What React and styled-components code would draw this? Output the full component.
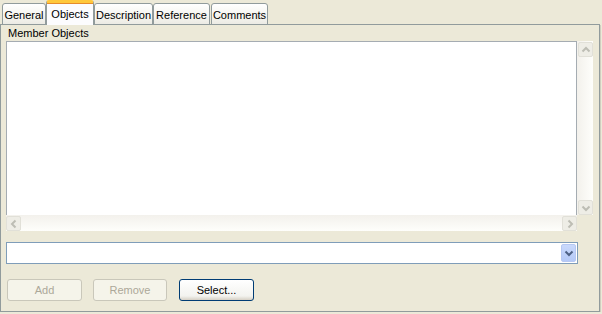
import React from "react";
import styled, { createGlobalStyle } from "styled-components";

const GlobalStyle = createGlobalStyle`
  html, body {
    margin: 0;
    padding: 0;
    background: #ece9d8;
  }
  body {
    font-family: "Liberation Sans", Arial, sans-serif;
    font-size: 11px;
    color: #000;
  }
`;

const Frame = styled.div`
  width: 600px;
  height: 312px;
  display: flex;
  flex-direction: column;
`;

const TabStrip = styled.div`
  height: 25px;
  display: flex;
  align-items: flex-end;
  padding-left: 2px;
  position: relative;
  z-index: 1;
`;

const Tab = styled.div`
  box-sizing: border-box;
  width: ${({ $w }) => $w}px;
  height: ${({ $active }) => ($active ? 25 : 22)}px;
  margin-right: ${({ $gap }) => $gap || 0}px;
  border: 1px solid #919b9c;
  border-bottom: ${({ $active }) => ($active ? "none" : "1px solid #919b9c")};
  border-top: ${({ $active }) => ($active ? "3px solid #ffc83c" : "1px solid #919b9c")};
  border-radius: 3px 3px 0 0;
  background: ${({ $active }) =>
    $active ? "#fcfcfe" : "linear-gradient(#ffffff, #f3f2ec 70%, #ecebe5)"};
  display: flex;
  align-items: center;
  justify-content: center;
  padding-top: ${({ $active }) => ($active ? 0 : 1)}px;
  white-space: nowrap;
  box-shadow: ${({ $active }) => ($active ? "inset 0 1px 0 #e68b2c" : "none")};
`;

const Pane = styled.div`
  box-sizing: border-box;
  flex: 1;
  margin-top: -1px;
  border: 1px solid #919b9c;
  background: #ece9d8;
  padding: 0 6px 0 5px;
  display: flex;
  flex-direction: column;
  box-shadow: 1px 1px 0 #d0cec0;
`;

const Label = styled.div`
  height: 16px;
  line-height: 16px;
  padding-left: 2px;
`;

const ScrollPane = styled.div`
  height: 190px;
  display: grid;
  grid-template-columns: 1fr 16px;
  grid-template-rows: 1fr 16px;
`;

const ListBox = styled.div`
  box-sizing: border-box;
  background: #fff;
  border: 1px solid #a5acb2;
  border-bottom: none;
`;

const VTrack = styled.div`
  background: linear-gradient(90deg, #f3f1ec, #fefefb);
  display: flex;
  flex-direction: column;
  justify-content: space-between;
  padding: 1px 0 0 1px;
`;

const HTrack = styled.div`
  background: linear-gradient(#f3f1ec, #fefefb);
  display: flex;
  justify-content: space-between;
  padding: 1px 0 0 0;
`;

const Corner = styled.div`
  background: #ece9d8;
`;

const ArrowButton = styled.div`
  box-sizing: border-box;
  width: 15px;
  height: 15px;
  border: 1px solid #e1e0d8;
  border-radius: 2px;
  background: #eeede6;
  display: flex;
  align-items: center;
  justify-content: center;
`;

const Combo = styled.div`
  box-sizing: border-box;
  margin-top: 11px;
  width: 572px;
  height: 22px;
  border: 1px solid #7f9db9;
  background: #fff;
  display: flex;
  justify-content: flex-end;
  align-items: center;
  padding-right: 1px;
`;

const ComboButton = styled.div`
  box-sizing: border-box;
  width: 15px;
  height: 18px;
  border-radius: 2px;
  background: linear-gradient(#c9d9fc, #b4c9f7);
  border: 1px solid #b6c8f3;
  display: flex;
  align-items: center;
  justify-content: center;
`;

const ButtonRow = styled.div`
  margin-top: 15px;
  display: flex;
  padding-left: 1px;
`;

const Button = styled.div`
  box-sizing: border-box;
  width: ${({ $w }) => $w || 75}px;
  height: 22px;
  margin-right: ${({ $mr }) => $mr || 0}px;
  border: 1px solid ${({ $disabled }) => ($disabled ? "#c9c7ba" : "#003c74")};
  border-radius: 3px;
  background: ${({ $disabled }) =>
    $disabled ? "#f5f4ea" : "linear-gradient(#ffffff, #f3f3ef 80%, #d6d0c5)"};
  color: ${({ $disabled }) => ($disabled ? "#aca899" : "#000")};
  display: flex;
  align-items: center;
  justify-content: center;
`;

const Chevron = ({ dir, color = "#bdbdb4" }) => {
  const paths = {
    up: "M1.5 6.5 L5 3 L8.5 6.5",
    down: "M1.5 3.5 L5 7 L8.5 3.5",
    left: "M6.5 1.5 L3 5 L6.5 8.5",
    right: "M3.5 1.5 L7 5 L3.5 8.5",
  };
  return (
    <svg width="10" height="10" viewBox="0 0 10 10">
      <path d={paths[dir]} fill="none" stroke={color} strokeWidth="2" />
    </svg>
  );
};

const tabs = [
  { name: "General", w: 44 },
  { name: "Objects", w: 48, active: true },
  { name: "Description", w: 59 },
  { name: "Reference", w: 57, gap: 1 },
  { name: "Comments", w: 57 },
];

const App = () => {
  return (
    <Frame>
      <GlobalStyle />
      <TabStrip>
        {tabs.map((t) => (
          <Tab key={t.name} $w={t.w} $active={t.active} $gap={t.gap}>
            {t.name}
          </Tab>
        ))}
      </TabStrip>
      <Pane>
        <Label>Member Objects</Label>
        <ScrollPane>
          <ListBox />
          <VTrack>
            <ArrowButton>
              <Chevron dir="up" />
            </ArrowButton>
            <ArrowButton>
              <Chevron dir="down" />
            </ArrowButton>
          </VTrack>
          <HTrack>
            <ArrowButton>
              <Chevron dir="left" />
            </ArrowButton>
            <ArrowButton>
              <Chevron dir="right" />
            </ArrowButton>
          </HTrack>
          <Corner />
        </ScrollPane>
        <Combo>
          <ComboButton>
            <Chevron dir="down" color="#4d6185" />
          </ComboButton>
        </Combo>
        <ButtonRow>
          <Button $disabled $mr={11}>Add</Button>
          <Button $disabled $w={74} $mr={12}>Remove</Button>
          <Button>Select...</Button>
        </ButtonRow>
      </Pane>
    </Frame>
  );
};

export default App;
